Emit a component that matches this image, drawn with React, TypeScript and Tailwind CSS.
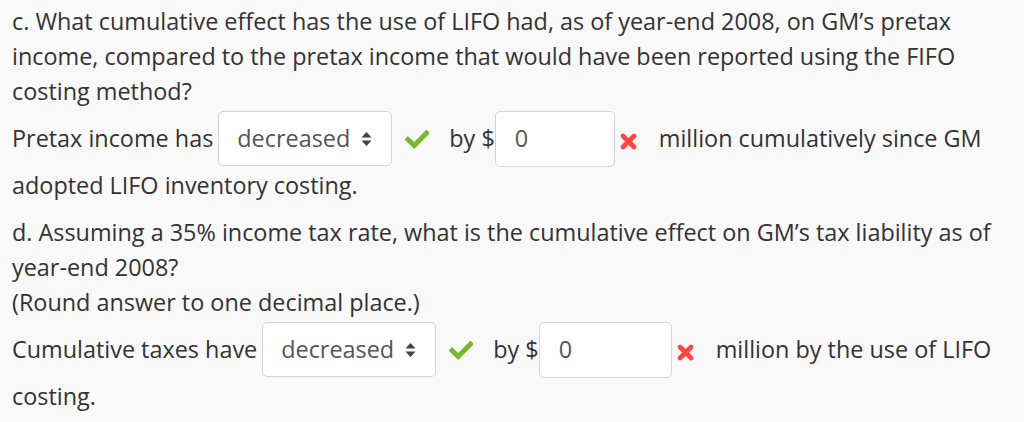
import React from "react";

function Check() {
  return (
    <svg width="24" height="19" viewBox="0 0 24 19" className="shrink-0">
      <path d="M3 9.5 L9.2 15.5 L21.5 3" fill="none" stroke="#76b82a" strokeWidth="4.8" strokeLinecap="square" strokeLinejoin="miter" />
    </svg>
  );
}

function Cross() {
  return (
    <svg width="17" height="17" viewBox="0 0 17 17" className="shrink-0">
      <path d="M3 3 L14 14 M14 3 L3 14" fill="none" stroke="#ff4444" strokeWidth="4.6" strokeLinecap="round" />
    </svg>
  );
}

function SelectBox() {
  return (
    <div className="flex h-[55px] w-[174px] shrink-0 items-center justify-between rounded-[5px] border border-[#d4d4d4] bg-white pl-[18px] pr-[19px] text-[#555]">
      <span>decreased</span>
      <svg width="11" height="16" viewBox="0 0 11 16">
        <path d="M5.5 1 L10.5 6.5 L0.5 6.5 Z M5.5 15 L10.5 9.5 L0.5 9.5 Z" fill="#444" />
      </svg>
    </div>
  );
}

function InputBox({ w }: { w: string }) {
  return (
    <div className={`flex h-[56px] shrink-0 items-center rounded-[5px] border border-[#d4d4d4] bg-white pl-[19px] text-[#555] ${w}`}>
      0
    </div>
  );
}

export default function App() {
  return (
    <div
      className="min-h-[422px] w-[1024px] bg-[#f9f9f9] pl-[12px] pt-[4px] text-[23.4px] leading-[35px] text-[#333]"
      style={{ fontFamily: '"Open Sans", "Noto Sans", sans-serif' }}
    >
      <div>
        <div>c. What cumulative effect has the use of LIFO had, as of year-end 2008, on GM’s pretax</div>
        <div>income, compared to the pretax income that would have been reported using the FIFO</div>
        <div>costing method?</div>
        <div className="flex h-[59px] items-center">
          <span>Pretax income has</span>
          <div className="ml-[5px]">
            <SelectBox />
          </div>
          <div className="ml-[13px] mt-[2px] flex">
            <Check />
          </div>
          <span className="ml-[20px]">by $</span>
          <div>
            <InputBox w="w-[120px]" />
          </div>
          <div className="ml-[5px] mt-[6px] flex">
            <Cross />
          </div>
          <span className="ml-[22px]">million cumulatively since GM</span>
        </div>
        <div>adopted LIFO inventory costing.</div>
      </div>
      <div className="mt-[12px]">
        <div>d. Assuming a 35% income tax rate, what is the cumulative effect on GM’s tax liability as of</div>
        <div>year-end 2008?</div>
        <div>(Round answer to one decimal place.)</div>
        <div className="flex h-[59px] items-center">
          <span>Cumulative taxes have</span>
          <div className="ml-[5px]">
            <SelectBox />
          </div>
          <div className="ml-[13px] mt-[2px] flex">
            <Check />
          </div>
          <span className="ml-[20px]">by $</span>
          <div>
            <InputBox w="w-[133px]" />
          </div>
          <div className="ml-[5px] mt-[6px] flex">
            <Cross />
          </div>
          <span className="ml-[22px]">million by the use of LIFO</span>
        </div>
        <div>costing.</div>
      </div>
    </div>
  );
}
